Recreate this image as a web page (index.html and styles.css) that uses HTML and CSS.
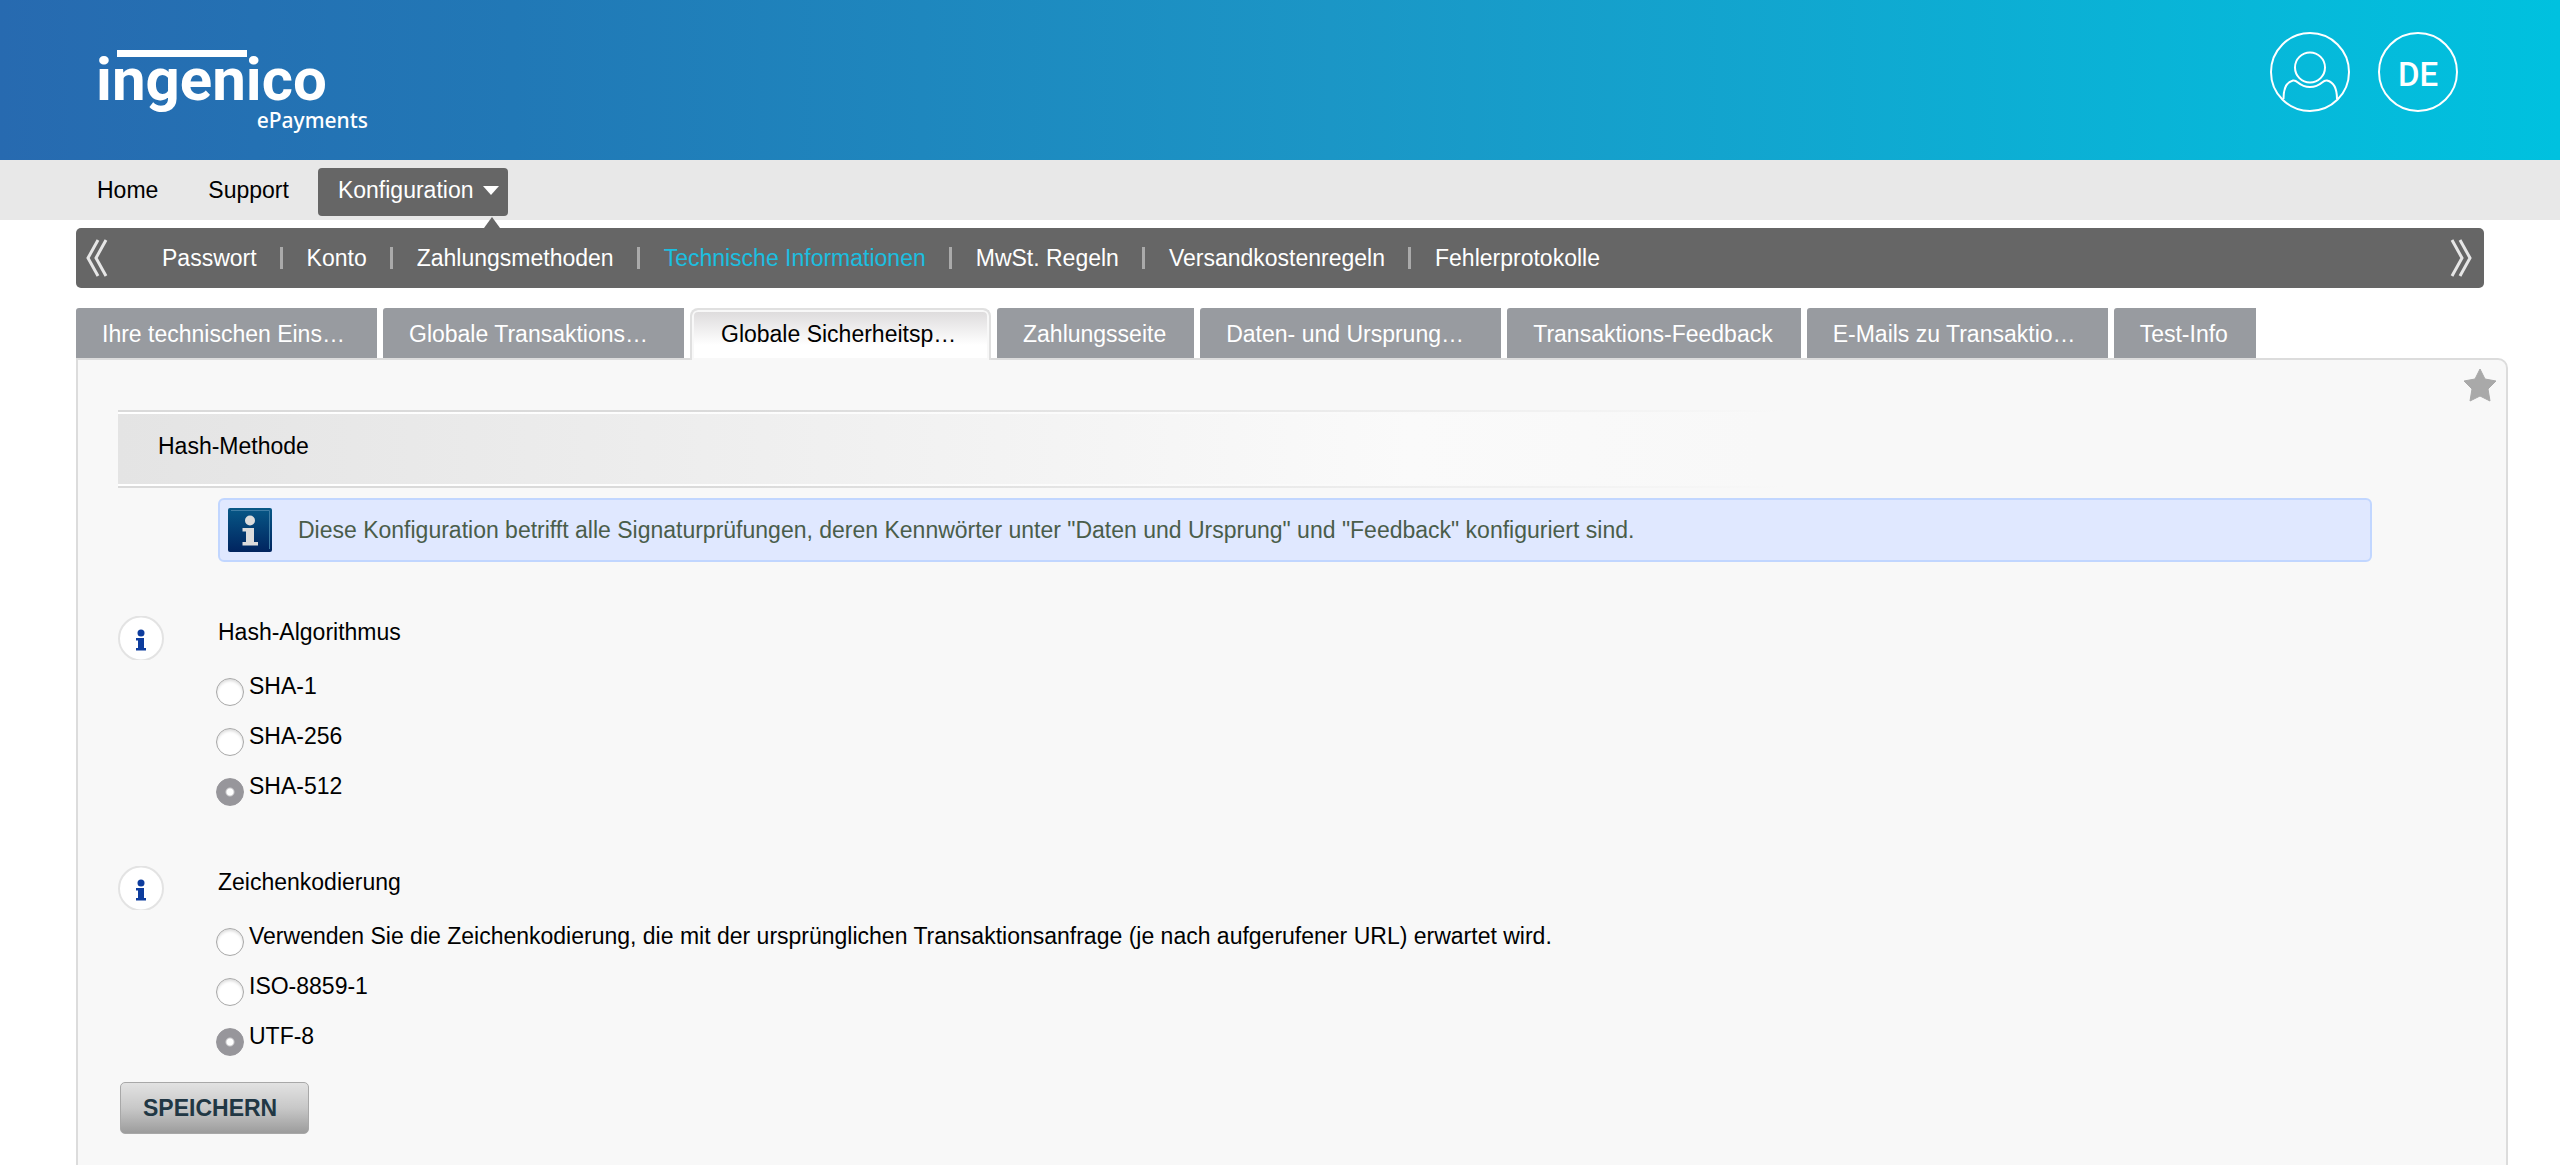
FILE: index.html
```html
<!DOCTYPE html>
<html lang="de">
<head>
<meta charset="utf-8">
<meta name="viewport" content="width=device-width, initial-scale=1">
<title>Technische Informationen</title>
<link rel="stylesheet" href="styles.css">
</head>
<body>
<header class="banner">
  <a class="logo" href="#">
    <span class="logo-bar"></span>
    <span class="logo-name">ingenico</span>
    <span class="logo-sub">ePayments</span>
  </a>
  <div class="account">
    <button class="round" type="button" aria-label="Benutzer">
      <svg viewBox="0 0 80 80" fill="none" stroke="#fff" stroke-width="2"><circle cx="40" cy="40" r="39"/><circle cx="40" cy="35.500" r="15"/><path d="M13.500 67c0-10 3-17 9.500-18.500 5-1.200 5 6.500 17 6.500s12-7.700 17-6.500c6.500 1.500 10 8.500 10 18.500"/></svg>
    </button>
    <button class="round round-lang" type="button">DE</button>
  </div>
</header>

<nav class="main-nav">
  <a href="#">Home</a>
  <a href="#">Support</a>
  <a class="current" href="#">Konfiguration<svg class="caret" viewBox="0 0 16 10"><path d="M0 0h16L8 9z" fill="#fff"/></svg></a>
</nav>

<nav class="sub-nav">
  <button class="scroll" type="button" aria-label="Zurück"><svg viewBox="0 0 24 38" fill="none" stroke="#e6e6e6" stroke-width="3"><path d="M13 1 3 19l10 18M21 1 11 19l10 18"/></svg></button>
  <ul class="sub-list">
    <li><a href="#">Passwort</a></li>
    <li><a href="#">Konto</a></li>
    <li><a href="#">Zahlungsmethoden</a></li>
    <li><a class="selected" href="#">Technische Informationen</a></li>
    <li><a href="#">MwSt. Regeln</a></li>
    <li><a href="#">Versandkostenregeln</a></li>
    <li><a href="#">Fehlerprotokolle</a></li>
  </ul>
  <button class="scroll" type="button" aria-label="Weiter"><svg viewBox="0 0 24 38" fill="none" stroke="#e6e6e6" stroke-width="3"><path d="m3 1 10 18L3 37M11 1l10 18-10 18"/></svg></button>
</nav>

<main class="content">
  <div class="tabs">
    <a class="tab wide" href="#">Ihre technischen Eins…</a>
    <a class="tab wide" href="#">Globale Transaktions…</a>
    <a class="tab wide active" href="#">Globale Sicherheitsp…</a>
    <a class="tab" href="#">Zahlungsseite</a>
    <a class="tab wide" href="#">Daten- und Ursprung…</a>
    <a class="tab" href="#">Transaktions-Feedback</a>
    <a class="tab wide" href="#">E-Mails zu Transaktio…</a>
    <a class="tab" href="#">Test-Info</a>
  </div>
  <form class="panel">
    <button class="favorite" type="button" aria-label="Favorit"><svg viewBox="0 0 34 34"><path d="M17 1l5 10 11 2-8 8 2 12-10-5-10 5 2-12-8-8 11-2z" fill="#a9a9a9" stroke="#a9a9a9" stroke-linejoin="round"/></svg></button>
    <h1 class="section-title">Hash-Methode</h1>
    <div class="notice">
      <svg class="notice-icon" viewBox="0 0 44 44"><defs><linearGradient id="ng" x2="0" y2="1"><stop offset="0" stop-color="#075887"/><stop offset="1" stop-color="#01245f"/></linearGradient></defs><rect width="44" height="44" rx="2" fill="url(#ng)"/><path d="M3 2.500h38.500V41" fill="none" stroke="#3f7da5"/><circle cx="22" cy="12.500" r="5" fill="#dcdcdc"/><path d="M14.500 20h11.500v14h4v3.500H14.500V34H18V23.500h-3.500z" fill="#dcdcdc"/></svg>
      <p>Diese Konfiguration betrifft alle Signaturprüfungen, deren Kennwörter unter "Daten und Ursprung" und "Feedback" konfiguriert sind.</p>
    </div>
    <fieldset class="group">
      <svg class="hint" viewBox="0 0 46 44"><circle cx="23" cy="22.500" r="22" fill="#fff" stroke="#e3e3e3" stroke-width="2"/><circle cx="23" cy="17" r="3.500" fill="#0d3c9d"/><path d="M18 22h8v10h2v2.500H18V32h2v-7.500h-2z" fill="#0d3c9d"/></svg>
      <div class="options" role="radiogroup" aria-labelledby="algo">
        <h2 id="algo">Hash-Algorithmus</h2>
        <label><input type="radio" name="algo">SHA-1</label>
        <label><input type="radio" name="algo">SHA-256</label>
        <label><input type="radio" name="algo" checked>SHA-512</label>
      </div>
    </fieldset>
    <fieldset class="group">
      <svg class="hint" viewBox="0 0 46 44"><circle cx="23" cy="22.500" r="22" fill="#fff" stroke="#e3e3e3" stroke-width="2"/><circle cx="23" cy="17" r="3.500" fill="#0d3c9d"/><path d="M18 22h8v10h2v2.500H18V32h2v-7.500h-2z" fill="#0d3c9d"/></svg>
      <div class="options" role="radiogroup" aria-labelledby="enc">
        <h2 id="enc">Zeichenkodierung</h2>
        <label><input type="radio" name="enc">Verwenden Sie die Zeichenkodierung, die mit der ursprünglichen Transaktionsanfrage (je nach aufgerufener URL) erwartet wird.</label>
        <label><input type="radio" name="enc">ISO-8859-1</label>
        <label><input type="radio" name="enc" checked>UTF-8</label>
      </div>
    </fieldset>
    <button class="save" type="submit">SPEICHERN</button>
  </form>
</main>
</body>
</html>
```
FILE: styles.css
```css
* {
  box-sizing: border-box;
}

body {
  margin: 0;
  min-height: 100vh;
  display: flex;
  flex-direction: column;
  background: #fff;
  color: #000;
  font: 23px/28px "Liberation Sans", Arial, sans-serif;
}

a {
  color: inherit;
  text-decoration: none;
}

button {
  padding: 0;
  border: 0;
  background: none;
  font: inherit;
  cursor: pointer;
}

svg {
  display: block;
}

/* Banner */
.banner {
  height: 160px;
  padding: 32px 102px 0 96px;
  display: flex;
  justify-content: space-between;
  align-items: flex-start;
  background: linear-gradient(90deg, #276ab0, #2178b6 20%, #1b96c6 52%, #06b9da 90%, #00c1df);
  color: #fff;
}

.logo {
  position: relative;
  width: 272px;
  padding-top: 20px;
  display: flex;
  flex-direction: column;
}

.logo-name {
  font: 700 60px/56px Roboto, sans-serif;
}

.logo-sub {
  align-self: flex-end;
  font: 500 21px/24px "Noto Sans", sans-serif;
}

.logo-bar {
  position: absolute;
  left: 21px;
  top: 18px;
  width: 130px;
  height: 7px;
  background: #fff;
}

.account {
  display: flex;
  gap: 28px;
}

.round {
  width: 80px;
  height: 80px;
  border-radius: 50%;
  color: #fff;
}

.round-lang {
  padding-top: 6px;
  border: 2px solid #fff;
  font: 500 33px/40px Roboto, sans-serif;
}

/* Main navigation */
.main-nav {
  height: 60px;
  padding: 8px 0 0 72px;
  display: flex;
  background: #e8e8e8;
}

.main-nav a {
  height: 48px;
  padding: 0 25px;
  line-height: 44px;
}

.main-nav .current {
  position: relative;
  display: flex;
  margin-left: 4px;
  padding: 0 9px 0 20px;
  border-radius: 4px;
  background: #666;
  color: #fff;
}

.main-nav .current::after {
  content: "";
  position: absolute;
  right: 8px;
  top: 49px;
  border: 8px solid transparent;
  border-top: 0;
  border-bottom: 11px solid #666;
}

.caret {
  width: 16px;
  height: 10px;
  margin: 18px 0 0 10px;
}

/* Sub navigation */
.sub-nav {
  height: 60px;
  margin: 8px 76px 0;
  padding: 0 11px 0 9px;
  display: flex;
  align-items: center;
  border-radius: 5px;
  background: #666;
  color: #fff;
}

.scroll {
  width: 24px;
  height: 38px;
}

.sub-list {
  flex: 1;
  margin: 0;
  padding: 0 0 0 53px;
  display: flex;
  gap: 23px;
  list-style: none;
  line-height: 60px;
}

.sub-list li {
  display: flex;
  align-items: center;
  gap: 24px;
}

.sub-list li + li::before {
  content: "";
  width: 3px;
  height: 22px;
  background: #aaa;
}

.sub-list .selected {
  color: #1bbfe0;
}

/* Tabs */
.content {
  flex: 1;
  margin: 20px 52px 0 76px;
  display: flex;
  flex-direction: column;
}

.tabs {
  display: flex;
  gap: 6px;
}

.tab {
  height: 50px;
  padding: 0 28px 0 26px;
  border-radius: 3px 0 0;
  background: #989ba0;
  color: #fff;
  line-height: 52px;
  white-space: nowrap;
}

.wide {
  width: 301px;
}

.active {
  position: relative;
  height: 52px;
  margin: 0 0 -2px;
  padding-left: 29px;
  border: 2px solid #e0e0e0;
  border-bottom: 0;
  border-radius: 8px 8px 0 0;
  background: linear-gradient(#dcdadb, #fff 70%);
  box-shadow: inset 0 0 0 2px #f8f8f8;
  color: #000;
  line-height: 48px;
  z-index: 1;
}

/* Panel */
.panel {
  position: relative;
  flex: 1;
  padding: 50px 40px 24px;
  border: 2px solid #dcdcdc;
  border-bottom: 0;
  border-radius: 0 10px 0 0;
  background: #f8f8f8;
}

.favorite {
  position: absolute;
  right: 9px;
  top: 8px;
  width: 34px;
  height: 34px;
}

.section-title {
  height: 78px;
  margin: 0 0 10px;
  padding: 4px 40px;
  background:
    linear-gradient(90deg, #dadada 25%, #f8f8f8 71%) top / 100% 2px no-repeat,
    linear-gradient(90deg, #dadada 25%, #f8f8f8 71%) bottom / 100% 2px no-repeat,
    linear-gradient(90deg, #fff, #f8f8f8 71%) 0 2px / 100% 2px no-repeat,
    linear-gradient(90deg, #fff, #f8f8f8 71%) 0 74px / 100% 2px no-repeat,
    linear-gradient(90deg, #e4e4e4, #fafafa 55%, #f8f8f8 70%);
  font-size: 23px;
  font-weight: 400;
  line-height: 64px;
}

.notice {
  margin: 0 94px 54px 100px;
  padding: 0 8px;
  display: flex;
  align-items: center;
  gap: 26px;
  border: 2px solid #c1d6ff;
  border-radius: 6px;
  background: #e0e8ff;
  color: #4a5d4a;
  line-height: 60px;
}

.notice p {
  margin: 0;
}

.notice-icon {
  width: 44px;
  height: 44px;
}

.group {
  margin: 0 0 55px;
  padding: 0;
  border: 0;
  display: flex;
  gap: 54px;
}

.group + .save {
  margin-top: -34px;
}

.hint {
  width: 46px;
  height: 44px;
}

.options h2 {
  margin: 2px 0 15px;
  font-size: 23px;
  font-weight: 400;
  line-height: 28px;
}

.options label {
  display: flex;
  gap: 5px;
  line-height: 50px;
}

.options input {
  appearance: none;
  flex: none;
  width: 28px;
  height: 28px;
  margin: 17px 0 0 -2px;
  border: 1px solid #a8a8a8;
  border-radius: 50%;
  background: #fff;
  box-shadow: inset 0 2px 3px #ddd;
}

.options input:checked {
  border-color: #97969b;
  background: radial-gradient(circle, #fff 3px, #97969b 5px);
  box-shadow: none;
}

.save {
  display: block;
  height: 52px;
  margin-left: 2px;
  padding: 0 31px 0 22px;
  border: 1px solid #a8a8a8;
  border-radius: 5px;
  background: linear-gradient(#e2e2e2, #c8c8c8 50%, #9c9c9c);
  color: #213744;
  font-weight: 700;
  line-height: 50px;
}
```
